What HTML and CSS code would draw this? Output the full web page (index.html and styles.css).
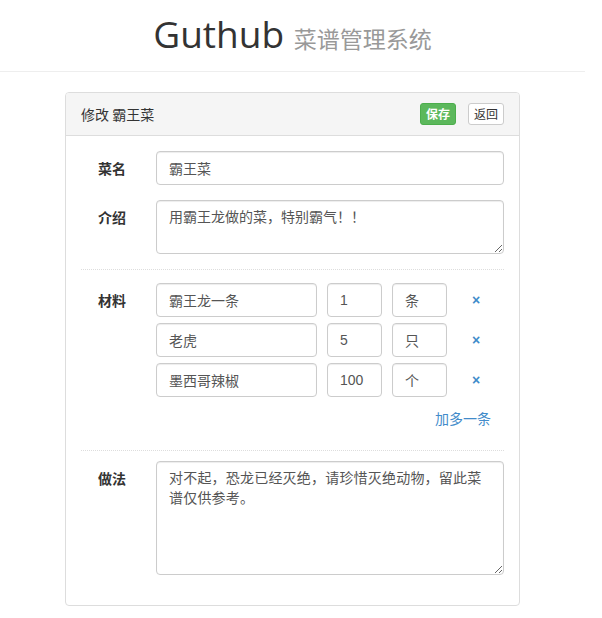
FILE: index.html
```html
<!DOCTYPE html>
<html lang="zh-CN">
<head>
<meta charset="utf-8">
<title>Guthub 菜谱管理系统</title>
<link rel="stylesheet" href="styles.css">
</head>
<body>
<div class="page">
  <header class="page-header">
    <h1 class="brand">Guthub <small class="brand-sub">菜谱管理系统</small></h1>
  </header>
  <div class="panel">
    <div class="panel-heading">
      <span class="panel-title">修改 霸王菜</span>
      <div class="actions">
        <button class="btn btn-success">保存</button>
        <button class="btn btn-default">返回</button>
      </div>
    </div>
    <div class="panel-body">
      <div class="form-row">
        <label class="form-label">菜名</label>
        <div class="form-field">
          <input class="form-control" type="text" value="霸王菜">
        </div>
      </div>
      <div class="form-row">
        <label class="form-label">介绍</label>
        <div class="form-field">
          <textarea class="form-control" rows="2">用霸王龙做的菜，特别霸气！！</textarea>
        </div>
      </div>
      <hr class="divider">
      <div class="form-row materials">
        <label class="form-label">材料</label>
        <div class="form-field">
          <div class="mat-row">
            <input class="form-control mat-name" type="text" value="霸王龙一条">
            <input class="form-control mat-qty" type="text" value="1">
            <input class="form-control mat-unit" type="text" value="条">
            <a class="remove" href="#">×</a>
          </div>
          <div class="mat-row">
            <input class="form-control mat-name" type="text" value="老虎">
            <input class="form-control mat-qty" type="text" value="5">
            <input class="form-control mat-unit" type="text" value="只">
            <a class="remove" href="#">×</a>
          </div>
          <div class="mat-row">
            <input class="form-control mat-name" type="text" value="墨西哥辣椒">
            <input class="form-control mat-qty" type="text" value="100">
            <input class="form-control mat-unit" type="text" value="个">
            <a class="remove" href="#">×</a>
          </div>
          <div class="add-more"><a href="#">加多一条</a></div>
        </div>
      </div>
      <hr class="divider divider-2">
      <div class="form-row last">
        <label class="form-label">做法</label>
        <div class="form-field">
          <textarea class="form-control method" rows="5">对不起，恐龙已经灭绝，请珍惜灭绝动物，留此菜谱仅供参考。</textarea>
        </div>
      </div>
    </div>
  </div>
</div>
</body>
</html>
```
FILE: styles.css
```css
* { box-sizing: border-box; }
html, body { margin: 0; padding: 0; background: #fff; }
body {
  font-family: "Liberation Sans", "Noto Sans CJK SC", sans-serif;
  font-size: 14px;
  line-height: 20px;
  color: #333;
}
.page { width: 585px; }
.page-header {
  border-bottom: 1px solid #eee;
  text-align: center;
  padding: 10px 0 0;
  height: 72px;
}
.brand {
  margin: 0;
  font-family: "Open Sans", "Noto Sans CJK SC", sans-serif;
  font-weight: 400;
  font-size: 37px;
  line-height: 48px;
  color: #333;
}
.brand-sub {
  font-family: "Noto Sans CJK SC", sans-serif;
  font-size: 23px;
  color: #999;
  font-weight: 400;
}
.panel {
  width: 455px;
  margin: 20px auto 0;
  border: 1px solid #ddd;
  border-radius: 4px;
  background: #fff;
}
.panel-heading {
  display: flex;
  align-items: center;
  justify-content: space-between;
  padding: 10px 15px;
  background: #f5f5f5;
  border-bottom: 1px solid #ddd;
  border-radius: 3px 3px 0 0;
}
.panel-title {
  font-family: "Noto Sans CJK SC", sans-serif;
  font-size: 14px;
  line-height: 22px;
  color: #333;
}
.actions { display: flex; gap: 12px; }
.btn {
  font-family: "Noto Sans CJK SC", sans-serif;
  font-size: 12px;
  line-height: 18px;
  padding: 1px 5px;
  border: 1px solid #ccc;
  border-radius: 3px;
  background: #fff;
  color: #333;
  cursor: pointer;
}
.btn-success {
  background: #5cb85c;
  border-color: #4cae4c;
  color: #fff;
  font-weight: 700;
}
.panel-body { padding: 15px 15px 15px; }
.form-row { display: flex; gap: 15px; margin-bottom: 15px; }
.form-label {
  width: 60px;
  flex: none;
  text-align: right;
  padding: 7px 15px 0 0;
  font-family: "Noto Sans CJK SC", sans-serif;
  font-weight: 700;
  line-height: 20px;
}
.form-field { flex: 1; min-width: 0; }
.form-control {
  display: block;
  width: 100%;
  height: 34px;
  padding: 6px 12px;
  font-family: "Liberation Sans", "Noto Sans CJK SC", sans-serif;
  font-size: 14px;
  line-height: 20px;
  color: #555;
  background: #fff;
  border: 1px solid #ccc;
  border-radius: 4px;
  box-shadow: inset 0 1px 1px rgba(0,0,0,.075);
  margin: 0;
}
textarea.form-control { height: auto; resize: vertical; }
.method { letter-spacing: 0.2px; }
.divider {
  border: 0;
  border-top: 1px dotted #ddd;
  margin: 0 0 13px;
  height: 0;
}
.divider-2 { margin-bottom: 10px; }
.mat-row {
  display: flex;
  align-items: center;
  gap: 10px;
  margin-bottom: 6px;
}
.mat-row .form-control { flex: none; }
.mat-name { width: 161px !important; }
.mat-qty, .mat-unit { width: 55px !important; }
.remove {
  margin-left: 15px;
  color: #428bca;
  text-decoration: none;
  font-size: 14px;
  font-weight: 700;
}
.add-more {
  text-align: right;
  padding: 5px 13px 0 0;
  margin-bottom: 6px;
}
.add-more a {
  font-family: "Noto Sans CJK SC", sans-serif;
  color: #428bca;
  text-decoration: none;
}
```
